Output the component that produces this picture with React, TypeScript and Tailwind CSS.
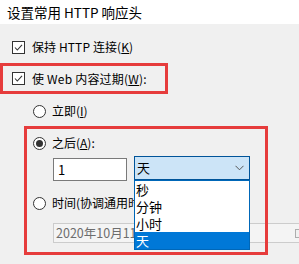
const font = { fontFamily: '"Noto Sans CJK SC", "Noto Sans", sans-serif' }

function CheckBox() {
  return (
    <svg width="13" height="13" viewBox="0 0 13 13" className="shrink-0">
      <rect x="0.5" y="0.5" width="12" height="12" fill="#fff" stroke="#333" />
      <path d="M3 6.5 L5.3 9 L10 3.8" fill="none" stroke="#333" strokeWidth="1.1" />
    </svg>
  )
}

function Radio({ checked }: { checked?: boolean }) {
  return (
    <svg width="13" height="13" viewBox="0 0 13 13" className="shrink-0">
      <circle cx="6.5" cy="6.5" r="6" fill="#fff" stroke="#333" />
      {checked && <circle cx="6.5" cy="6.5" r="3.5" fill="#333" />}
    </svg>
  )
}

const options = ["秒", "分钟", "小时", "天"]

export default function App() {
  return (
    <div className="w-[299px] h-[264px] overflow-hidden bg-[#f0f0f0] text-black text-[12px] leading-[16px]" style={font}>
      <div className="h-[24px] bg-white pl-[7px] pt-[3px] text-[13.5px] leading-[18px]">
        设置常用 HTTP 响应头
      </div>

      <div className="relative isolate">
        {/* keep-alive */}
        <div className="mt-[15px] flex h-[16px] items-center pl-[12px]">
          <CheckBox />
          <span className="ml-[7px] tracking-[0.1px]">
            保持 HTTP 连接(<u>K</u>)
          </span>
        </div>

        {/* expire content */}
        <div className="mt-[8px] flex h-[31px] w-[168px] items-center border-[3px] border-[#e63c3c] pl-[9px]">
          <CheckBox />
          <span className="ml-[7px] tracking-[0.2px]">
            使 Web 内容过期(<u>W</u>):
          </span>
        </div>

        <div className="mt-[9px] flex h-[16px] items-center pl-[33px]">
          <Radio />
          <span className="ml-[6px]">
            立即(<u>I</u>)
          </span>
        </div>

        <div className="ml-[24px] mt-[7px] w-[244px] border-[3px] border-[#e63c3c] pb-[9px]">
          <div className="mt-[6px] flex h-[16px] items-center pl-[6px]">
            <Radio checked />
            <span className="ml-[6px]">
              之后(<u>A</u>):
            </span>
          </div>

          <div className="mt-[5px] flex items-start pl-[26px]">
            <div className="mt-[2px] flex h-[23px] w-[74px] items-center border border-[#7a7a7a] bg-white pl-[4px] text-[13px]">
              1
            </div>
            <div className="relative z-10 ml-[7px] w-[116px]">
              <div className="flex h-[24px] items-center justify-between border border-[#005499] bg-[#cce4f7] pl-[2px] pr-[5px] text-[13px]">
                <span>天</span>
                <svg width="9" height="6" viewBox="0 0 9 6">
                  <path d="M0.5 0.8 L4.5 4.8 L8.5 0.8" fill="none" stroke="#555" strokeWidth="1" />
                </svg>
              </div>
              <div className="absolute left-0 top-full w-full border border-[#0067b8] bg-white">
                {options.map((o) => (
                  <div
                    key={o}
                    className={
                      o === "天"
                        ? "h-[17px] bg-[#0078d7] pl-[1px] text-[13px] leading-[17px] text-white"
                        : "h-[17px] pl-[1px] text-[13px] leading-[17px]"
                    }
                  >
                    {o}
                  </div>
                ))}
              </div>
            </div>
          </div>

          <div className="mt-[14px] flex h-[16px] items-center whitespace-nowrap pl-[6px]">
            <Radio />
            {/* clipped where the open list covers it */}
            <span className="ml-[6px] w-[82px] overflow-hidden">
              时间(协调通用时间)(<u>U</u>):
            </span>
          </div>

          <div className="relative -z-10 ml-[26px] mt-[12px] flex h-[20px] w-[262px] items-center border border-[#cccccc] bg-[#f4f4f4] pl-[2px] text-[12.5px] text-[#6d6d6d]">
            <span className="w-[78px] overflow-hidden whitespace-nowrap">2020年10月11日 星期日</span>
            <span className="ml-auto mr-[10px] h-[9px] w-[9px] border border-[#adadad] bg-[#f0f0f0]" />
          </div>
        </div>
      </div>
    </div>
  )
}
